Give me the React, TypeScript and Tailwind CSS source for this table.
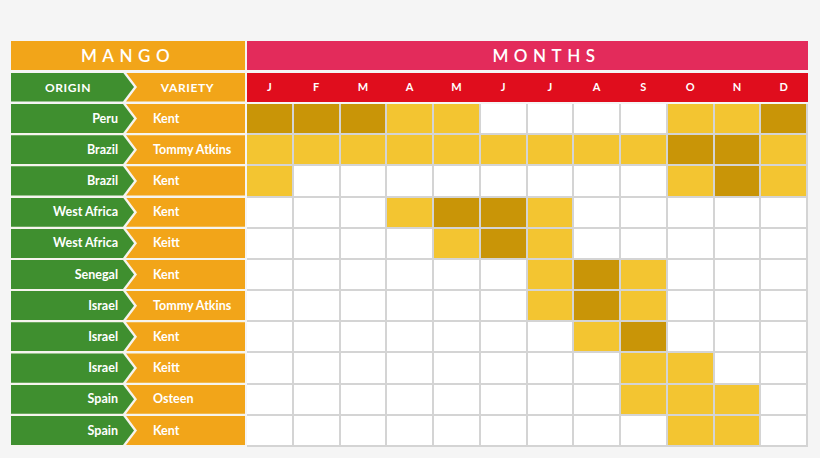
const MONTHS = ['J', 'F', 'M', 'A', 'M', 'J', 'J', 'A', 'S', 'O', 'N', 'D']

// 0 = off season, 1 = available, 2 = peak
const ROWS: { origin: string; variety: string; months: number[] }[] = [
  { origin: 'Peru', variety: 'Kent', months: [2, 2, 2, 1, 1, 0, 0, 0, 0, 1, 1, 2] },
  { origin: 'Brazil', variety: 'Tommy Atkins', months: [1, 1, 1, 1, 1, 1, 1, 1, 1, 2, 2, 1] },
  { origin: 'Brazil', variety: 'Kent', months: [1, 0, 0, 0, 0, 0, 0, 0, 0, 1, 2, 1] },
  { origin: 'West Africa', variety: 'Kent', months: [0, 0, 0, 1, 2, 2, 1, 0, 0, 0, 0, 0] },
  { origin: 'West Africa', variety: 'Keitt', months: [0, 0, 0, 0, 1, 2, 1, 0, 0, 0, 0, 0] },
  { origin: 'Senegal', variety: 'Kent', months: [0, 0, 0, 0, 0, 0, 1, 2, 1, 0, 0, 0] },
  { origin: 'Israel', variety: 'Tommy Atkins', months: [0, 0, 0, 0, 0, 0, 1, 2, 1, 0, 0, 0] },
  { origin: 'Israel', variety: 'Kent', months: [0, 0, 0, 0, 0, 0, 0, 1, 2, 0, 0, 0] },
  { origin: 'Israel', variety: 'Keitt', months: [0, 0, 0, 0, 0, 0, 0, 0, 1, 1, 0, 0] },
  { origin: 'Spain', variety: 'Osteen', months: [0, 0, 0, 0, 0, 0, 0, 0, 1, 1, 1, 0] },
  { origin: 'Spain', variety: 'Kent', months: [0, 0, 0, 0, 0, 0, 0, 0, 0, 1, 1, 0] },
]

const CELL = ['bg-white', 'bg-[#f3c531]', 'bg-[#c99507]']

function LabelRow({ left, right, header = false }: { left: string; right: string; header?: boolean }) {
  return (
    <div className="flex h-full">
      <div
        className={`flex w-[123px] shrink-0 items-center bg-[#3f8f2f] pt-[1px] text-white [clip-path:polygon(0_0,112px_0,123px_50%,112px_100%,0_100%)] ${
          header ? 'justify-center pr-[9px] text-[12px] tracking-[0.6px] uppercase' : 'justify-end pr-[16px] text-[12.5px]'
        }`}
      >
        {left}
      </div>
      <div
        className={`-ml-[8px] flex flex-1 items-center bg-[#f2a519] pt-[1px] text-white [clip-path:polygon(0_0,100%_0,100%_100%,0_100%,11px_50%)] ${
          header ? 'justify-center pl-[4px] text-[12px] tracking-[0.6px] uppercase' : 'pl-[27px] text-[12.5px]'
        }`}
      >
        {right}
      </div>
    </div>
  )
}

export default function App() {
  return (
    <div className="h-[458px] w-[820px] bg-[#f5f5f5] pt-[41px] pl-[11px] font-['Lato','Open_Sans',sans-serif] font-bold">
      <div className="flex gap-[2px]">
        {/* left: mango / origin / variety */}
        <div className="flex w-[234px] flex-col">
          <div className="flex h-[29px] items-center justify-center bg-[#f2a519] pt-[1px] text-[17px] font-semibold tracking-[5.5px] text-white">
            MANGO
          </div>
          <div className="mt-[2.5px] h-[29px]">
            <LabelRow left="Origin" right="Variety" header />
          </div>
          <div className="mt-[2.5px] grid h-[343px] grid-rows-[repeat(11,1fr)] gap-[2px] bg-[#f6f4ee] pb-[2px]">
            {ROWS.map((r, i) => (
              <LabelRow key={i} left={r.origin} right={r.variety} />
            ))}
          </div>
        </div>

        {/* right: months */}
        <div className="flex w-[561px] flex-col">
          <div className="flex h-[29px] items-center justify-center bg-[#e32b5b] pt-[1px] pl-[38px] text-[17px] font-semibold tracking-[5.5px] text-white">
            MONTHS
          </div>
          <div className="mt-[2.5px] grid h-[29px] grid-cols-12 items-center gap-[2px] bg-[#e00d1d] pt-[1px] pr-[2px] text-center text-[11px] text-white">
            {MONTHS.map((m, i) => (
              <span key={i}>{m}</span>
            ))}
          </div>
          <div className="mt-[2.5px] grid h-[343px] grid-cols-12 grid-rows-[repeat(11,1fr)] gap-[2px] bg-[#d4d4d4] pr-[2px] pb-[2px]">
            {ROWS.flatMap((r, i) => r.months.map((v, j) => <div key={`${i}-${j}`} className={CELL[v]} />))}
          </div>
        </div>
      </div>
    </div>
  )
}
